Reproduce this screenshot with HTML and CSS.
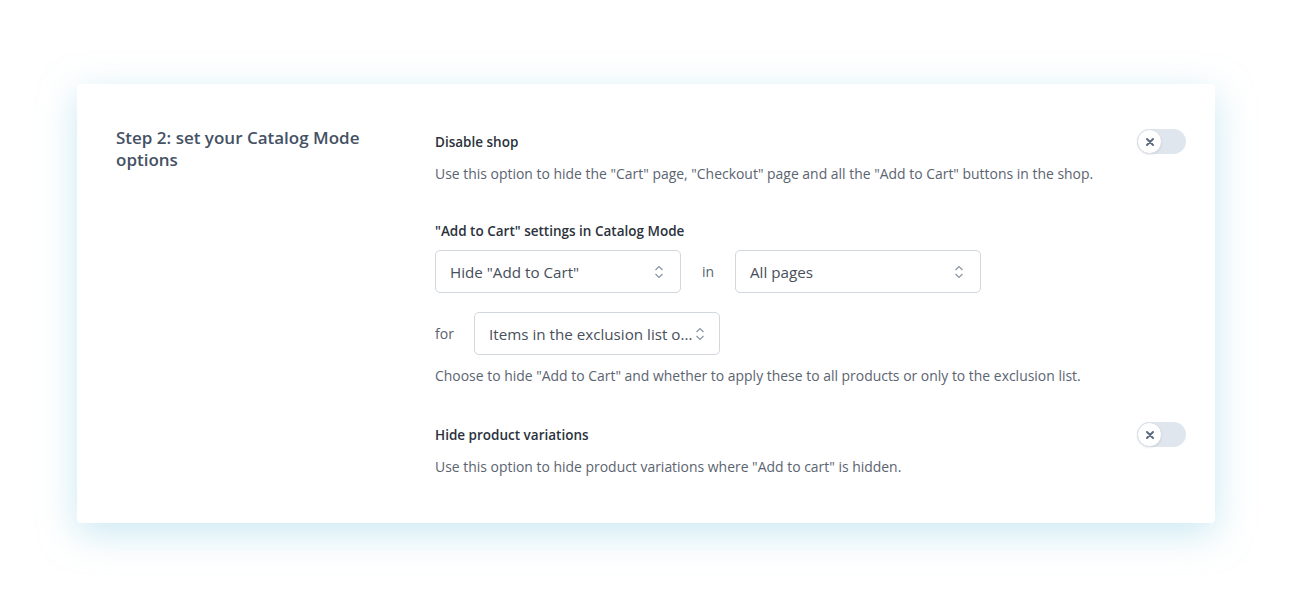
FILE: index.html
```html
<!DOCTYPE html>
<html lang="en">
<head>
    <meta charset="UTF-8">
    <meta name="viewport" content="width=device-width, initial-scale=1.0">
    <title>Catalog Mode options</title>
    <link rel="stylesheet" href="styles.css">
</head>
<body>
    <div class="card">
        <h2 class="step-title">Step 2: set your Catalog Mode options</h2>

        <div class="options">
            <!-- Disable shop -->
            <div class="option-row">
                <div class="option-text">
                    <div class="option-label">Disable shop</div>
                    <p class="option-desc">Use this option to hide the "Cart" page, "Checkout" page and all the "Add to Cart" buttons in the shop.</p>
                </div>
                <span class="toggle">
                    <span class="knob">
                        <svg width="10" height="10" viewBox="0 0 10 10"><path d="M2 2L8 8M8 2L2 8" stroke="#5d6b7e" stroke-width="2" stroke-linecap="round"/></svg>
                    </span>
                </span>
            </div>

            <!-- Add to cart settings -->
            <div class="option-block">
                <div class="option-label">"Add to Cart" settings in Catalog Mode</div>
                <div class="select-row">
                    <div class="select">
                        <span class="select-text">Hide "Add to Cart"</span>
                        <svg class="chevrons" width="10" height="16" viewBox="0 0 10 16"><path d="M1.5 6L5 2.5L8.5 6M1.5 10L5 13.5L8.5 10" fill="none" stroke="#8a94a0" stroke-width="1.2"/></svg>
                    </div>
                    <span class="joiner">in</span>
                    <div class="select">
                        <span class="select-text">All pages</span>
                        <svg class="chevrons" width="10" height="16" viewBox="0 0 10 16"><path d="M1.5 6L5 2.5L8.5 6M1.5 10L5 13.5L8.5 10" fill="none" stroke="#8a94a0" stroke-width="1.2"/></svg>
                    </div>
                </div>
                <div class="select-row second">
                    <span class="joiner first">for</span>
                    <div class="select narrow-pad">
                        <span class="select-text">Items in the exclusion list o...</span>
                        <svg class="chevrons" width="10" height="16" viewBox="0 0 10 16"><path d="M1.5 6L5 2.5L8.5 6M1.5 10L5 13.5L8.5 10" fill="none" stroke="#8a94a0" stroke-width="1.2"/></svg>
                    </div>
                </div>
                <p class="option-desc help">Choose to hide "Add to Cart" and whether to apply these to all products or only to the exclusion list.</p>
            </div>

            <!-- Hide product variations -->
            <div class="option-row last">
                <div class="option-text">
                    <div class="option-label">Hide product variations</div>
                    <p class="option-desc">Use this option to hide product variations where "Add to cart" is hidden.</p>
                </div>
                <span class="toggle">
                    <span class="knob">
                        <svg width="10" height="10" viewBox="0 0 10 10"><path d="M2 2L8 8M8 2L2 8" stroke="#5d6b7e" stroke-width="2" stroke-linecap="round"/></svg>
                    </span>
                </span>
            </div>
        </div>
    </div>
</body>
</html>
```

FILE: styles.css
```css
body {
    font-family: "Open Sans", "Liberation Sans", sans-serif;
    background: #fff;
    margin: 0;
    padding: 84px 0 60px 77px;
    color: #3b4552;
}

.card {
    width: 1138px;
    height: 439px;
    box-sizing: border-box;
    background: #fff;
    border-radius: 4px;
    box-shadow: 0 10px 36px rgba(150, 212, 232, 0.5);
    padding: 45px 29px 0 39px;
    display: flex;
}

.step-title {
    width: 260px;
    margin: -2px 59px 0 0;
    font-size: 17px;
    line-height: 22px;
    font-weight: 600;
    color: #455164;
}

.options {
    flex: 1;
}

.option-row {
    display: flex;
    justify-content: space-between;
    align-items: flex-start;
}

.option-text {
    padding-top: 3px;
}

.option-label {
    font-size: 13.5px;
    line-height: 20px;
    font-weight: 600;
    color: #2b323c;
}

.option-desc {
    margin: 12px 0 0;
    font-size: 13.95px;
    line-height: 20px;
    color: #5b6470;
}

.option-block {
    margin-top: 37px;
}

.select-row {
    display: flex;
    align-items: center;
    margin-top: 9px;
}

.select-row.second {
    margin-top: 19px;
}

.select {
    width: 246px;
    height: 43px;
    box-sizing: border-box;
    border: 1px solid #d2d7dd;
    border-radius: 5px;
    padding: 0 16px 0 14px;
    display: flex;
    align-items: center;
    justify-content: space-between;
    font-size: 15.2px;
    color: #474f5b;
}

.select.narrow-pad {
    padding-right: 14px;
}

.select-text {
    white-space: nowrap;
}

.chevrons {
    flex-shrink: 0;
}

.joiner {
    font-size: 14px;
    color: #59626e;
    width: 54px;
    text-align: center;
}

.joiner.first {
    width: 39px;
    text-align: left;
}

.help {
    margin-top: 11px;
}

.option-row.last {
    margin-top: 36px;
}

.toggle {
    width: 49px;
    height: 25px;
    border-radius: 13px;
    background: #dfe6ee;
    display: flex;
    align-items: center;
    flex-shrink: 0;
}

.knob {
    width: 25px;
    height: 25px;
    box-sizing: border-box;
    border-radius: 50%;
    background: #fff;
    border: 1px solid #d8dee6;
    box-shadow: 0 1px 2px rgba(0, 0, 0, 0.08);
    display: flex;
    align-items: center;
    justify-content: center;
}
```
